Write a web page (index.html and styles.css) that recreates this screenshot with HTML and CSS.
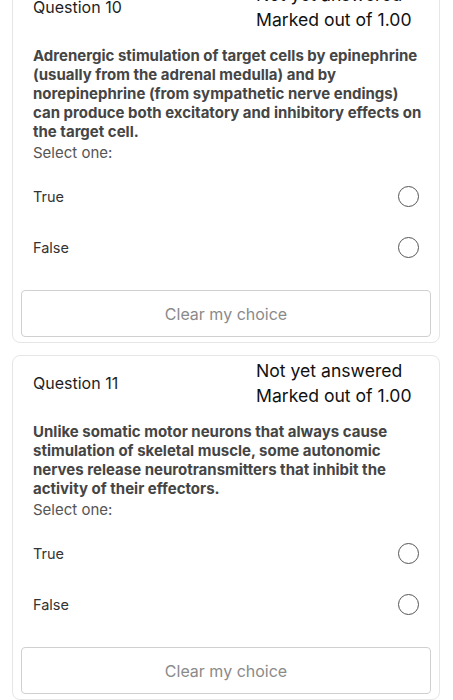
FILE: index.html
```html
<!DOCTYPE html>
<html>
<head>
  <meta name="viewport" content="width=device-width, initial-scale=1">
  <link rel="stylesheet" href="styles.css">
</head>
<body>
  <div class="quiz">
    <div class="card">
      <div class="card-head">
        <div class="qno">Question 10</div>
        <div class="state">
          <div>Not yet answered</div>
          <div>Marked out of 1.00</div>
        </div>
      </div>
      <div class="qtext">Adrenergic stimulation of target cells by epinephrine (usually from the adrenal medulla) and by norepinephrine (from sympathetic nerve endings) can produce both excitatory and inhibitory effects on the target cell.</div>
      <div class="prompt">Select one:</div>
      <div class="answers">
        <label class="answer"><span>True</span><span class="radio"></span></label>
        <label class="answer"><span>False</span><span class="radio"></span></label>
      </div>
      <button class="clear">Clear my choice</button>
    </div>

    <div class="card">
      <div class="card-head">
        <div class="qno">Question 11</div>
        <div class="state">
          <div>Not yet answered</div>
          <div>Marked out of 1.00</div>
        </div>
      </div>
      <div class="qtext">Unlike somatic motor neurons that always cause stimulation of skeletal muscle, some autonomic nerves release neurotransmitters that inhibit the activity of their effectors.</div>
      <div class="prompt">Select one:</div>
      <div class="answers">
        <label class="answer"><span>True</span><span class="radio"></span></label>
        <label class="answer"><span>False</span><span class="radio"></span></label>
      </div>
      <button class="clear">Clear my choice</button>
    </div>
  </div>
</body>
</html>
```

FILE: styles.css
```css
body {
  font-family: Inter, "Liberation Sans", Arial, sans-serif;
  margin: 0;
  padding: 0;
  background: #fff;
  color: #222;
}
.quiz {
  margin-top: -21px;
  padding: 0 13px 0 12px;
  display: flex;
  flex-direction: column;
  gap: 12px;
}
.card {
  border: 1px solid #e6e6e6;
  border-radius: 8px;
  padding: 2px 0 5px;
}
.card-head {
  display: flex;
  align-items: center;
  padding: 0 0 0 20px;
}
.qno {
  flex: 1;
  font-size: 16px;
  color: #1e1e1e;
}
.state {
  width: 183px;
  font-size: 17.6px;
  line-height: 25px;
  color: #111;
}
.qtext {
  margin-top: 14px;
  padding: 0 14px 0 20px;
  font-size: 15px;
  font-weight: 700;
  line-height: 19px;
  color: #454545;
}
.prompt {
  margin-top: 2px;
  padding: 0 20px;
  font-size: 15px;
  line-height: 19px;
  color: #555;
}
.answers {
  margin-top: 9px;
}
.answer {
  display: flex;
  align-items: center;
  justify-content: space-between;
  height: 51px;
  padding: 0 20px 0 20px;
  font-size: 14.5px;
  color: #333;
}
.radio {
  width: 19px;
  height: 19px;
  border: 1.4px solid #555;
  border-radius: 50%;
}
.clear {
  display: block;
  width: calc(100% - 16px);
  margin: 17px 8px 0;
  height: 47px;
  background: #fff;
  border: 1px solid #d0d0d0;
  border-radius: 4px;
  font-family: inherit;
  font-size: 16px;
  color: #8a8a8a;
}
```
